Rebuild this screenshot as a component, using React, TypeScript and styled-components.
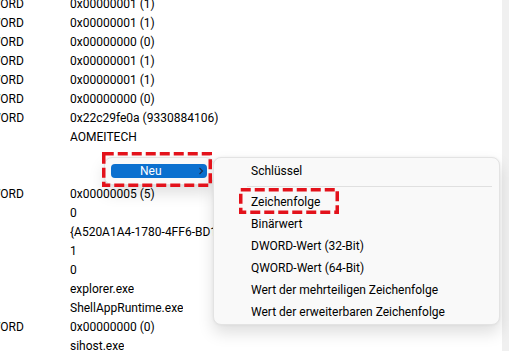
import React from 'react';
import styled, { createGlobalStyle } from 'styled-components';

const Global = createGlobalStyle`
  html, body { margin: 0; padding: 0; background: #ffffff; }
  body {
    width: 509px;
    height: 351px;
    overflow: hidden;
    font-family: Roboto, "Noto Sans", sans-serif;
  }
`;

const Window = styled.div`
  position: relative;
  display: flex;
  width: 509px;
  height: 351px;
  overflow: hidden;
  background: #ffffff;
`;

const Viewport = styled.div`
  flex: 1;
  overflow: hidden;
`;

const Sheet = styled.div`
  display: flex;
  flex-direction: column;
  margin: -6px 0 0 -46px;
`;

const Row = styled.div`
  display: grid;
  grid-template-columns: 116px max-content;
  height: 19px;
  align-items: center;
  font-size: 12px;
  color: #000000;
  white-space: nowrap;
`;

const Cell = styled.span`
  overflow: hidden;
`;

const ScrollTrack = styled.div`
  width: 7px;
  background: #f0f0f0;
`;

const Menu = styled.div<{ $x: number; $y: number; $w: number }>`
  position: absolute;
  left: ${p => p.$x}px;
  top: ${p => p.$y}px;
  width: ${p => p.$w}px;
  box-sizing: border-box;
  background: #f9f9f9;
  border: 1px solid #e3e3e3;
  border-radius: 8px;
  box-shadow: 0 8px 16px rgba(0, 0, 0, 0.13), 0 0 3px rgba(0, 0, 0, 0.06);
  font-size: 12px;
  color: #000000;
`;

const ParentMenu = styled(Menu)`
  padding: 6px;
`;

const SubMenu = styled(Menu)`
  display: flex;
  flex-direction: column;
  padding: 2px 0 1px;
`;

const ActiveItem = styled.div`
  display: flex;
  align-items: center;
  height: 14px;
  padding-left: 29px;
  padding-right: 3px;
  border-radius: 4px;
  background: #0b70cf;
  color: #ffffff;
  font-size: 12px;
`;

const ActiveLabel = styled.span`
  flex: 1;
  line-height: 14px;
`;

const Chevron = styled.svg`
  width: 6px;
  height: 8px;
`;

const Item = styled.div`
  height: 22px;
  display: flex;
  align-items: center;
  padding-left: 37px;
  white-space: nowrap;
`;

const Separator = styled.div`
  height: 1px;
  margin: 4px 7px 4px 33px;
  background: #e0e0e0;
`;

const Callout = styled.svg<{ $x: number; $y: number }>`
  position: absolute;
  left: ${p => p.$x}px;
  top: ${p => p.$y}px;
  overflow: visible;
`;

type RowData = { type: string; value: string };

const rows: RowData[] = [
  { type: 'REG_DWORD', value: '0x00000001 (1)' },
  { type: 'REG_DWORD', value: '0x00000001 (1)' },
  { type: 'REG_DWORD', value: '0x00000000 (0)' },
  { type: 'REG_DWORD', value: '0x00000001 (1)' },
  { type: 'REG_DWORD', value: '0x00000001 (1)' },
  { type: 'REG_DWORD', value: '0x00000000 (0)' },
  { type: 'REG_QWORD', value: '0x22c29fe0a (9330884106)' },
  { type: 'REG_SZ', value: 'AOMEITECH' },
  { type: '', value: '' },
  { type: '', value: '' },
  { type: 'REG_DWORD', value: '0x00000005 (5)' },
  { type: 'REG_SZ', value: '0' },
  { type: 'REG_SZ', value: '{A520A1A4-1780-4FF6-BD18-167343C5AF16}' },
  { type: 'REG_SZ', value: '1' },
  { type: 'REG_SZ', value: '0' },
  { type: 'REG_SZ', value: 'explorer.exe' },
  { type: 'REG_SZ', value: 'ShellAppRuntime.exe' },
  { type: 'REG_DWORD', value: '0x00000000 (0)' },
  { type: 'REG_SZ', value: 'sihost.exe' },
];

const subItems = [
  'Zeichenfolge',
  'Binärwert',
  'DWORD-Wert (32-Bit)',
  'QWORD-Wert (64-Bit)',
  'Wert der mehrteiligen Zeichenfolge',
  'Wert der erweiterbaren Zeichenfolge',
];

function DashedBox({ x, y, w, h }: { x: number; y: number; w: number; h: number }) {
  return (
    <Callout $x={x} $y={y} width={w} height={h} viewBox={`0 0 ${w} ${h}`}>
      <rect
        x={1.75}
        y={1.75}
        width={w - 3.5}
        height={h - 3.5}
        fill="none"
        stroke="#e3121b"
        strokeWidth={3.5}
        strokeDasharray="10 4"
      />
    </Callout>
  );
}

export default function App() {
  return (
    <>
      <Global />
      <Window>
        <Viewport>
          <Sheet>
            {rows.map((r, i) => (
              <Row key={i}>
                <Cell>{r.type}</Cell>
                <Cell>{r.value}</Cell>
              </Row>
            ))}
          </Sheet>
        </Viewport>
        <ScrollTrack />

        <ParentMenu $x={104} $y={157} $w={110}>
          <ActiveItem>
            <ActiveLabel>Neu</ActiveLabel>
            <Chevron viewBox="0 0 6 8">
              <path d="M1.5 1 L4.5 4 L1.5 7" fill="none" stroke="#1b2f4f" strokeWidth="1.1" />
            </Chevron>
          </ActiveItem>
        </ParentMenu>

        <SubMenu $x={213} $y={157} $w={287}>
          <Item>Schlüssel</Item>
          <Separator />
          {subItems.map(t => (
            <Item key={t}>{t}</Item>
          ))}
        </SubMenu>

        <DashedBox x={102} y={152} w={110} h={35} />
        <DashedBox x={239} y={188} w={100} h={26} />
      </Window>
    </>
  );
}
